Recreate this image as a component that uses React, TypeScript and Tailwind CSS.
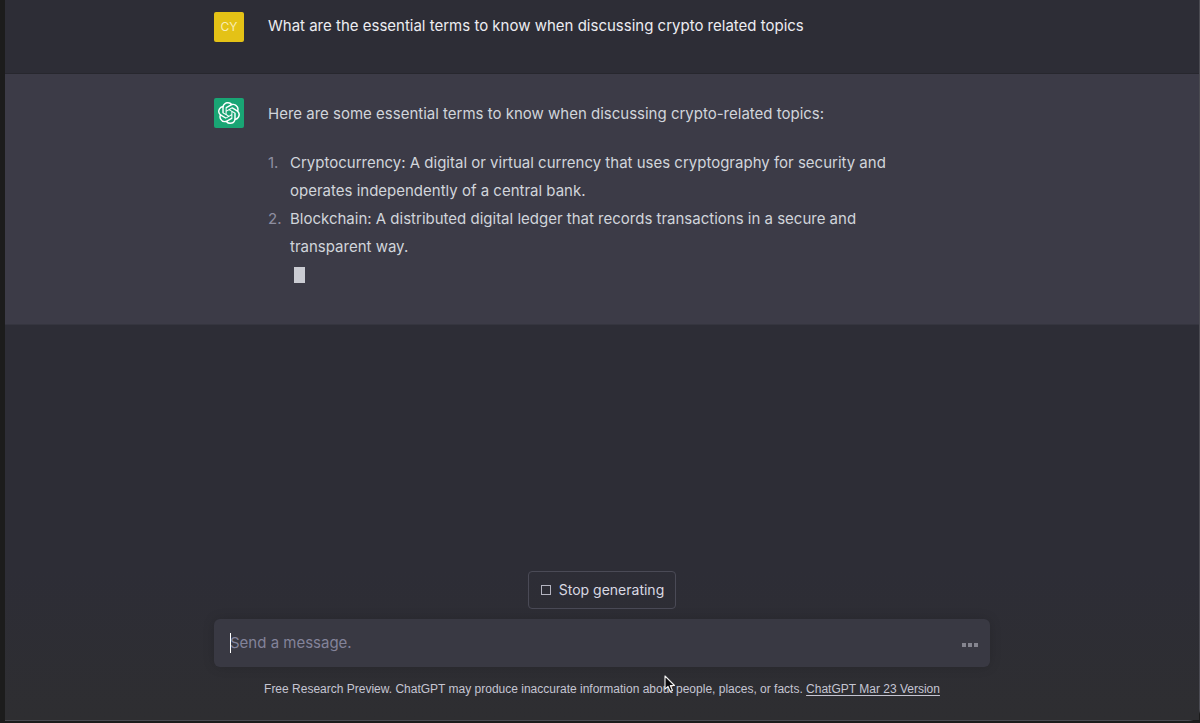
import type { ReactNode } from 'react'
import { SiOpenai } from 'react-icons/si'

const terms = [
  'Cryptocurrency: A digital or virtual currency that uses cryptography for security and operates independently of a central bank.',
  'Blockchain: A distributed digital ledger that records transactions in a secure and transparent way.',
]

export default function App() {
  return (
    <div className="flex min-h-screen bg-[#1c1c1c] pb-0.5 pl-[5px] font-['Inter','Liberation_Sans',sans-serif] text-[15px] leading-7">
      <div className="flex flex-1 flex-col rounded-br-xl border-r border-b border-[#4b4b52] bg-[#2d2d36]">
        <main>
          <Message
            className="border-b border-[#27272e] pt-3 pb-[31px]"
            avatar={<span className="text-[12px] text-[#f8edb4]">CY</span>}
            avatarClass="bg-[#e4c216]"
          >
            <p className="text-[#ececf1]">What are the essential terms to know when discussing crypto related topics</p>
          </Message>

          <Message
            className="border-b border-[#35353f] bg-[#3c3b47] pt-6 pb-[35px]"
            avatar={<SiOpenai className="size-[22px] text-white" aria-label="ChatGPT" />}
            avatarClass="bg-[#19a574]"
          >
            <div className="text-[#d1d5db]">
              <p className="pt-0.5">Here are some essential terms to know when discussing crypto-related topics:</p>
              <ol className="mt-[21px]">
                {terms.map((term, i) => (
                  <li key={term} className="flex">
                    <span className="w-[22px] shrink-0 text-[#8e8ea0]">{i + 1}.</span>
                    <span className="max-w-[620px]">{term}</span>
                  </li>
                ))}
              </ol>
              <div className="flex h-7 items-center pl-[26px]">
                <span className="h-4 w-[11px] bg-[#cbccd3]" />
              </div>
            </div>
          </Message>
        </main>

        <Composer />
      </div>
    </div>
  )
}

function Message({
  className,
  avatar,
  avatarClass,
  children,
}: {
  className: string
  avatar: ReactNode
  avatarClass: string
  children: ReactNode
}) {
  return (
    <section className={className}>
      <div className="mx-auto flex max-w-[776px] gap-6">
        <div className={`flex size-[30px] shrink-0 items-center justify-center rounded-xs ${avatarClass}`}>
          {avatar}
        </div>
        <div className="min-w-0 flex-1">{children}</div>
      </div>
    </section>
  )
}

function Composer() {
  return (
    <footer className="mt-auto flex flex-col items-center bg-linear-to-b from-[#2d2d36] to-[#2e2e31] pb-[21px]">
      <button
        type="button"
        className="flex h-[38px] items-center gap-[7px] rounded border border-[#4a4a56] px-[11px] text-[14px] text-[#d9d9e3]"
      >
        <svg viewBox="0 0 12 12" className="size-3" fill="none" stroke="#b4b4c0" aria-hidden="true">
          <rect x="1.5" y="1.5" width="9" height="9" />
        </svg>
        Stop generating
      </button>

      <form className="relative mt-[10px] flex h-12 w-full max-w-[776px] items-center rounded-md bg-[#393943] pr-3 pl-4 shadow-[0_0_12px_rgba(0,0,0,0.15)]">
        <span className="absolute top-[14px] left-4 h-5 w-px bg-white" />
        <input
          type="text"
          aria-label="Message"
          placeholder="Send a message."
          className="min-w-0 flex-1 bg-transparent outline-none placeholder:text-[#83839a]"
        />
        <button type="button" aria-label="Generating" className="flex gap-0.5 pt-1">
          <span className="size-1 bg-[#85858f]" />
          <span className="size-1 bg-[#85858f]" />
          <span className="size-1 bg-[#85858f]" />
        </button>
      </form>

      <p className="relative mt-3 font-['Liberation_Sans',Arial,sans-serif] text-[12px] leading-5 text-[#c5c5d2]">
        Free Research Preview. ChatGPT may produce inaccurate information about people, places, or facts.{' '}
        <a href="#" className="underline underline-offset-2">
          ChatGPT Mar 23 Version
        </a>
        <MousePointer />
      </p>
    </footer>
  )
}

function MousePointer() {
  return (
    <svg viewBox="0 0 12 18" className="absolute -top-1 left-[400px] h-[18px] w-3" aria-hidden="true">
      <path
        d="M1 1v13.2l3-2.8 2.2 5.1 2.3-1-2.2-5h4.2z"
        fill="#0b0b0d"
        stroke="#f2f2f2"
        strokeWidth="1.1"
        strokeLinejoin="round"
      />
    </svg>
  )
}
